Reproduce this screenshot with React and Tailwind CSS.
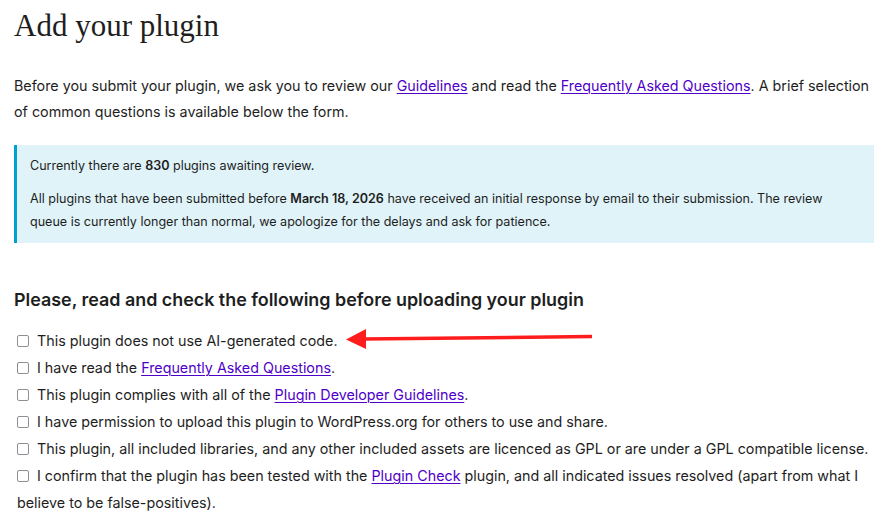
import React from 'react';

const items = [
  { text: ['This plugin does not use AI-generated code.'] },
  { text: ['I have read the ', { link: 'Frequently Asked Questions' }, '.'] },
  { text: ['This plugin complies with all of the ', { link: 'Plugin Developer Guidelines' }, '.'] },
  { text: ['I have permission to upload this plugin to WordPress.org for others to use and share.'] },
  { text: ['This plugin, all included libraries, and any other included assets are licenced as GPL or are under a GPL compatible license.'] },
  { text: ['I confirm that the plugin has been tested with the ', { link: 'Plugin Check' }, ' plugin, and all indicated issues resolved (apart from what I believe to be false-positives).'] },
];

const Link = ({ children }) => (
  <a href="#" className="text-[#4f00c8] underline underline-offset-2 decoration-1">{children}</a>
);

const Arrow = () => (
  <svg className="absolute left-[331px] top-[-1px]" width="250" height="24" viewBox="0 0 250 24">
    <line x1="18" y1="13" x2="247" y2="10.5" stroke="#ff1c1c" strokeWidth="3.5" />
    <polygon points="1,13.5 21,3 21,23" fill="#ff1c1c" />
  </svg>
);

export default function App() {
  return (
    <div className="bg-white min-h-screen px-[14px] pt-[6px] text-[#1e1e1e]" style={{ fontFamily: 'Inter, "Noto Sans", sans-serif' }}>
      <h1 className="text-[31px] leading-[40px] text-[#1e1e1e]" style={{ fontFamily: '"Liberation Serif", serif' }}>
        Add your plugin
      </h1>

      <p className="mt-[27px] text-[14.3px] leading-[26px]">
        Before you submit your plugin, we ask you to review our <Link>Guidelines</Link> and read the <Link>Frequently Asked Questions</Link>. A brief selection of common questions is available below the form.
      </p>

      <div className="mt-[20px] mr-[1px] bg-[#dff3f8] border-l-[3px] border-[#00a0d2] pl-[13px] pr-[16px] pt-[9px] pb-[10px] text-[12.55px] leading-[23px]">
        <p>Currently there are <strong className="font-semibold">830</strong> plugins awaiting review.</p>
        <p className="mt-[10px]">
          All plugins that have been submitted before <strong className="font-semibold">March 18, 2026</strong> have received an initial response by email to their submission. The review queue is currently longer than normal, we apologize for the delays and ask for patience.
        </p>
      </div>

      <h2 className="mt-[45px] text-[17.9px] leading-[24px] font-semibold">
        Please, read and check the following before uploading your plugin
      </h2>

      <ul className="mt-[15px] text-[14.3px] leading-[27px]">
        {items.map((item, i) => (
          <li key={i} className="relative pl-[3px]">
            <input type="checkbox" className="w-[12px] h-[12px] mr-[8px] align-[-1px] appearance-none border border-[#8c8f94] rounded-[2px] bg-white" />
            {item.text.map((t, j) => (typeof t === 'string' ? <span key={j}>{t}</span> : <Link key={j}>{t.link}</Link>))}
            {i === 0 && <Arrow />}
          </li>
        ))}
      </ul>
    </div>
  );
}
